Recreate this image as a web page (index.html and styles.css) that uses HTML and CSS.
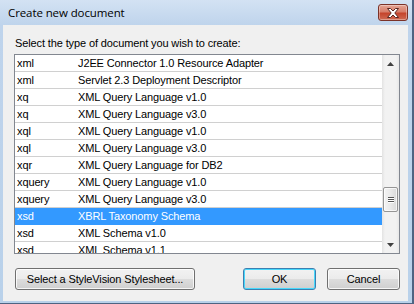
FILE: index.html
```html
<!DOCTYPE html>
<html lang="en">
<head>
    <meta charset="UTF-8">
    <meta name="viewport" content="width=device-width, initial-scale=1.0">
    <title>Create new document</title>
    <link rel="stylesheet" href="styles.css">
</head>
<body>
    <div class="window">
        <div class="titlebar">
            <span class="title">Create new document</span>
            <button class="close" title="Close">
                <svg width="14" height="10" viewBox="0 0 14 10">
                    <path d="M1.5 0.5 H4.5 L7 3 L9.5 0.5 H12.5 L8.8 5 L12.5 9.5 H9.5 L7 7 L4.5 9.5 H1.5 L5.2 5 Z" fill="#fff" stroke="#5a2620" stroke-width="1" stroke-linejoin="round"/>
                </svg>
            </button>
        </div>

        <div class="client">
            <p class="prompt">Select the type of document you wish to create:</p>

            <div class="list">
                <div class="rows">
                    <div class="row"><span class="ext">xml</span><span class="desc">J2EE Connector 1.0 Resource Adapter</span></div>
                    <div class="row"><span class="ext">xml</span><span class="desc">Servlet 2.3 Deployment Descriptor</span></div>
                    <div class="row"><span class="ext">xq</span><span class="desc">XML Query Language v1.0</span></div>
                    <div class="row"><span class="ext">xq</span><span class="desc">XML Query Language v3.0</span></div>
                    <div class="row"><span class="ext">xql</span><span class="desc">XML Query Language v1.0</span></div>
                    <div class="row"><span class="ext">xql</span><span class="desc">XML Query Language v3.0</span></div>
                    <div class="row"><span class="ext">xqr</span><span class="desc">XML Query Language for DB2</span></div>
                    <div class="row"><span class="ext">xquery</span><span class="desc">XML Query Language v1.0</span></div>
                    <div class="row"><span class="ext">xquery</span><span class="desc">XML Query Language v3.0</span></div>
                    <div class="row selected"><span class="ext">xsd</span><span class="desc">XBRL Taxonomy Schema</span></div>
                    <div class="row"><span class="ext">xsd</span><span class="desc">XML Schema v1.0</span></div>
                    <div class="row"><span class="ext">xsd</span><span class="desc">XML Schema v1.1</span></div>
                </div>

                <div class="scrollbar">
                    <div class="arrow">
                        <svg width="7" height="4" viewBox="0 0 7 4"><path d="M0 4 L3.5 0 L7 4 Z" fill="#404040"/></svg>
                    </div>
                    <div class="track">
                        <div class="thumb">
                            <span class="grip"></span>
                            <span class="grip"></span>
                            <span class="grip"></span>
                        </div>
                    </div>
                    <div class="arrow">
                        <svg width="7" height="4" viewBox="0 0 7 4"><path d="M0 0 L7 0 L3.5 4 Z" fill="#404040"/></svg>
                    </div>
                </div>
            </div>

            <div class="buttons">
                <button class="btn wide">Select a StyleVision Stylesheet...</button>
                <button class="btn default">OK</button>
                <button class="btn">Cancel</button>
            </div>
        </div>
    </div>
</body>
</html>
```

FILE: styles.css
```css
body {
    margin: 0;
    font-family: "Liberation Sans", Arial, sans-serif;
    font-size: 11px;
    letter-spacing: -0.12px;
    color: #000;
}

.window {
    width: 414px;
    height: 304px;
    box-sizing: border-box;
    display: flex;
    flex-direction: column;
    background: linear-gradient(#d3e2f3 0, #bfd4ec 25px, #b9d1ea 100%);
    box-shadow: inset -2px 0 0 #4e6482, inset 0 -1px 0 #4e6482;
}

.titlebar {
    height: 25px;
    display: flex;
    align-items: flex-start;
    padding-left: 8px;
    padding-right: 6px;
    flex-shrink: 0;
}

.title {
    font-family: "Open Sans", "Noto Sans", sans-serif;
    font-size: 11.5px;
    letter-spacing: -0.1px;
    line-height: 16px;
    margin-top: 5px;
    color: #000;
}

.close {
    margin-left: auto;
    margin-top: 4px;
    width: 30px;
    height: 17px;
    padding: 0;
    border: 1px solid #7b3228;
    border-radius: 3px;
    background: linear-gradient(#e5a595 0, #d77e6b 45%, #c5442c 55%, #cf6b54 100%);
    box-shadow: inset 0 0 0 1px rgba(255, 255, 255, 0.35);
    display: flex;
    align-items: center;
    justify-content: center;
}

.client {
    flex: 1;
    margin: 0 6px 3px 3px;
    padding: 12px 8px 0 11px;
    background: #f0f0f0;
}

.prompt {
    margin: 0 0 4px 1px;
    line-height: 13px;
}

.list {
    height: 200px;
    box-sizing: border-box;
    border: 1px solid #828790;
    background: #fff;
    display: flex;
}

.rows {
    flex: 1;
    overflow: hidden;
}

.row {
    display: flex;
    height: 16px;
    line-height: 16px;
    border-bottom: 1px solid #d0d0d0;
    white-space: nowrap;
}

.row.selected {
    background: #3399ff;
    color: #fff;
    border-bottom-color: #3399ff;
}

.ext {
    width: 61px;
    padding-left: 2px;
}

.scrollbar {
    width: 17px;
    display: flex;
    flex-direction: column;
    background: linear-gradient(to right, #e3e3e3, #f2f2f2 3px, #f2f2f2 14px, #e8e8e8);
}

.arrow {
    height: 17px;
    display: flex;
    align-items: center;
    justify-content: center;
}

.track {
    flex: 1;
    position: relative;
}

.thumb {
    position: absolute;
    top: 115px;
    left: 1px;
    width: 13px;
    height: 23px;
    border: 1px solid #959595;
    border-radius: 2px;
    background: linear-gradient(to right, #f4f4f4, #e9e9e9 50%, #d9d9d9);
    box-shadow: inset 0 0 0 1px rgba(255, 255, 255, 0.7);
    display: flex;
    flex-direction: column;
    align-items: center;
    justify-content: center;
    gap: 1px;
}

.grip {
    width: 6px;
    height: 1px;
    background: #555;
    box-shadow: 0 1px 0 #fff;
}

.buttons {
    display: flex;
    margin-top: 14px;
    padding-left: 1px;
}

.btn {
    height: 22px;
    width: 73px;
    padding: 0;
    font-family: "Liberation Sans", Arial, sans-serif;
    font-size: 11px;
    letter-spacing: -0.12px;
    color: #000;
    border: 1px solid #707070;
    border-radius: 3px;
    background: linear-gradient(#f2f2f2 0, #ebebeb 50%, #dddddd 50%, #cfcfcf 100%);
    box-shadow: inset 0 0 0 1px rgba(255, 255, 255, 0.8);
}

.btn.wide {
    width: 180px;
    margin-right: auto;
}

.btn.default {
    margin-right: 11px;
    border-color: #3c7fb1;
    box-shadow: inset 0 0 0 1px #48d8fb;
}
```
